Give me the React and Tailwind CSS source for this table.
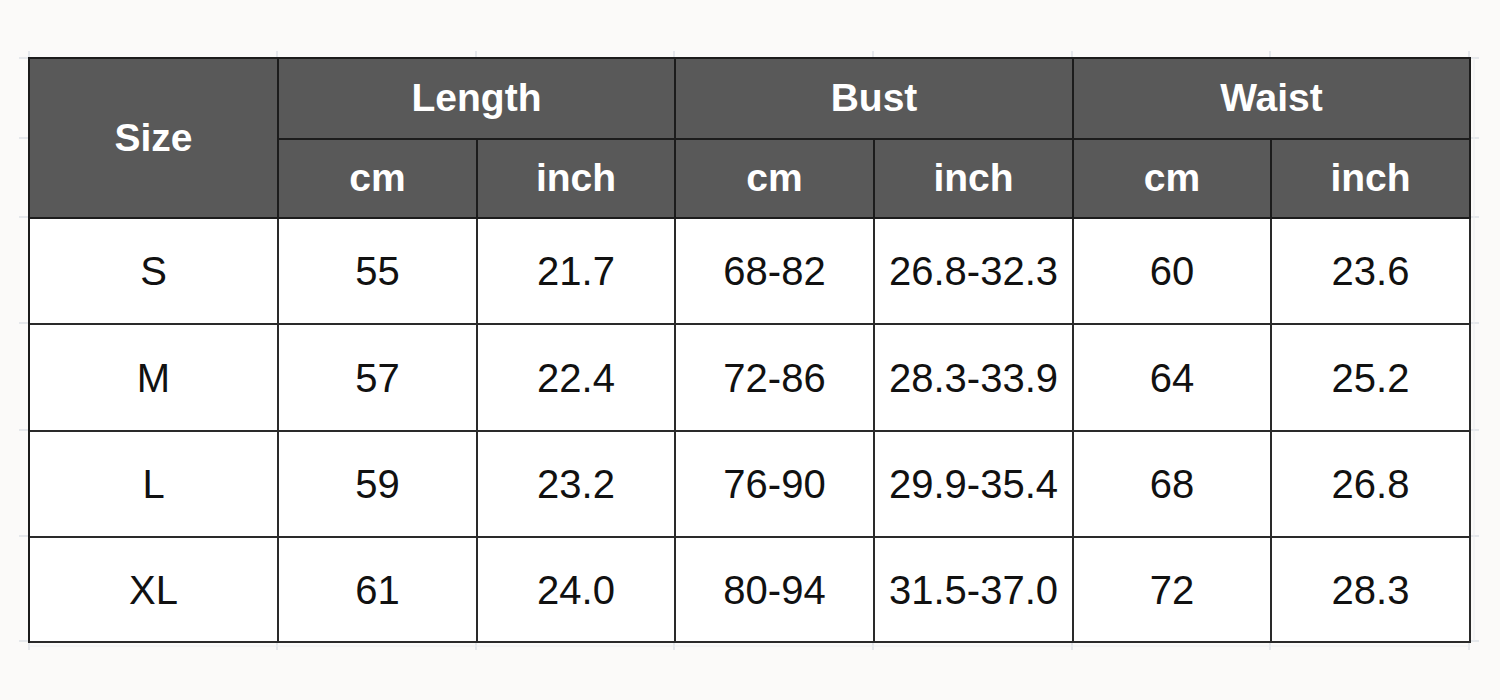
const groups = ['Length', 'Bust', 'Waist'];

const rows = [
  ['S', '55', '21.7', '68-82', '26.8-32.3', '60', '23.6'],
  ['M', '57', '22.4', '72-86', '28.3-33.9', '64', '25.2'],
  ['L', '59', '23.2', '76-90', '29.9-35.4', '68', '26.8'],
  ['XL', '61', '24.0', '80-94', '31.5-37.0', '72', '28.3'],
];

// column boundaries, used only for the faint spreadsheet ticks
const colX = [29, 277, 476, 674, 873, 1072, 1270, 1469];
const rowY = [58, 138, 217, 323, 430, 536, 641];

function Ticks() {
  return (
    <svg className="absolute left-0 top-0 pointer-events-none" width="1500" height="700">
      {colX.map((x) => (
        <g key={'c' + x}>
          <line x1={x} y1="51" x2={x} y2="58" stroke="#cfd5dd" strokeWidth="1" />
          <line x1={x} y1="641" x2={x} y2="650" stroke="#cfd5dd" strokeWidth="1" />
        </g>
      ))}
      {rowY.map((y) => (
        <g key={'r' + y}>
          <line x1="19" y1={y} x2="29" y2={y} stroke="#cfd5dd" strokeWidth="1" />
          <line x1="1469" y1={y} x2="1479" y2={y} stroke="#cfd5dd" strokeWidth="1" />
        </g>
      ))}
      <line x1="29" y1="646" x2="1469" y2="646" stroke="#eceef1" strokeWidth="1" />
      <line x1="1474" y1="58" x2="1474" y2="641" stroke="#eceef1" strokeWidth="1" />
    </svg>
  );
}

export default function App() {
  const head = 'flex items-center justify-center bg-[#595959] text-white font-bold text-[39px] border-r-2 border-b-2 border-[#1c1c1c]';
  const cell = 'flex items-center justify-center bg-white text-[#111] text-[40px] border-r-2 border-b-2 border-[#2a2a2a]';

  return (
    <div className="relative w-[1500px] h-[700px] bg-[#fbfaf9] overflow-hidden" style={{ fontFamily: '"Liberation Sans", Arial, sans-serif' }}>
      <Ticks />
      <div className="relative pl-[28px] pt-[57px]">
        <div className="grid w-fit border-l-2 border-t-2 border-[#1c1c1c] grid-cols-[249px_199px_198px_199px_199px_198px_199px] grid-rows-[81px_79px_106px_107px_106px_105px]">
          <div className={head + ' row-span-2'}>Size</div>
          {groups.map((g) => (
            <div key={g} className={head + ' col-span-2'}>{g}</div>
          ))}
          {groups.map((g) => (
            <>
              <div key={g + 'cm'} className={head}>cm</div>
              <div key={g + 'in'} className={head}>inch</div>
            </>
          ))}
          {rows.map((r) =>
            r.map((v, i) => (
              <div key={r[0] + i} className={cell}>{v}</div>
            ))
          )}
        </div>
      </div>
    </div>
  );
}
